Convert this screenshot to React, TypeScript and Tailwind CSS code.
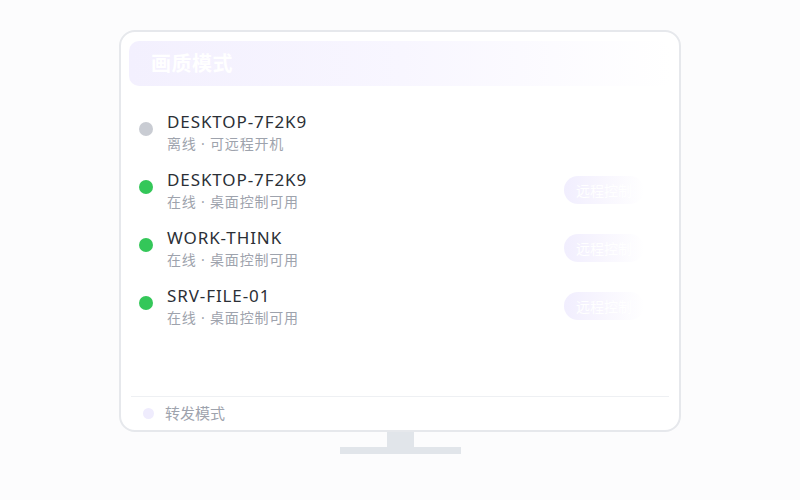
type Device = {
  name: string;
  online: boolean;
  status: string;
};

const devices: Device[] = [
  { name: "DESKTOP-7F2K9", online: false, status: "离线 · 可远程开机" },
  { name: "DESKTOP-7F2K9", online: true, status: "在线 · 桌面控制可用" },
  { name: "WORK-THINK", online: true, status: "在线 · 桌面控制可用" },
  { name: "SRV-FILE-01", online: true, status: "在线 · 桌面控制可用" },
];

const font = {
  fontFamily: '"Noto Sans", "Noto Sans CJK SC", sans-serif',
};

function DeviceRow({ device }: { device: Device }) {
  return (
    <div className="flex h-[42px] items-center pl-[18px] pr-[35px]">
      <span
        className={
          device.online
            ? "mb-[6px] h-[14px] w-[14px] shrink-0 rounded-full bg-[#34c759]"
            : "mb-[6px] h-[14px] w-[14px] shrink-0 rounded-full bg-[#c9ccd3]"
        }
      />
      <div className="ml-[14px] flex flex-col">
        <span className="text-[17px] leading-[22px] tracking-[0.9px] text-[#2b2f36]">
          {device.name}
        </span>
        <span className="mt-[1px] text-[14px] leading-[20px] tracking-[0.8px] text-[#9ea3ad]">
          {device.status}
        </span>
      </div>
      {device.online && (
        <div className="ml-auto flex h-[28px] w-[80px] items-center rounded-full bg-gradient-to-r from-[#f1eefe] via-[#f8f6fe] to-white pl-[12px] text-[14px] text-white">
          远程控制
        </div>
      )}
    </div>
  );
}

export default function App() {
  return (
    <div
      className="flex h-[500px] w-full flex-col items-center bg-[#fcfcfd] pt-[30px]"
      style={font}
    >
      <div className="flex h-[402px] w-[562px] flex-col rounded-[16px] border-2 border-[#e6e8ec] bg-white">
        <div className="mx-[8px] mt-[9px] flex h-[45px] items-center rounded-[10px] bg-gradient-to-r from-[#f3f0fe] via-[#f8f6ff] to-white pl-[22px]">
          <span className="text-[20px] font-bold tracking-[0.5px] text-white">画质模式</span>
        </div>
        <div className="mt-[25px] flex flex-col gap-[16px]">
          {devices.map((d, i) => (
            <DeviceRow key={i} device={d} />
          ))}
        </div>
        <div className="flex-1" />
        <div className="mx-[10px] border-t border-[#eef0f3]" />
        <div className="flex h-[33px] items-center pl-[22px]">
          <span className="h-[11px] w-[11px] rounded-full bg-[#efecfd]" />
          <span className="ml-[11px] text-[15px] text-[#9ea3ad]">转发模式</span>
        </div>
      </div>
      <div className="h-[15px] w-[27px] bg-[#e1e5ea]" />
      <div className="h-[7px] w-[121px] bg-[#e1e5ea]" />
    </div>
  );
}
